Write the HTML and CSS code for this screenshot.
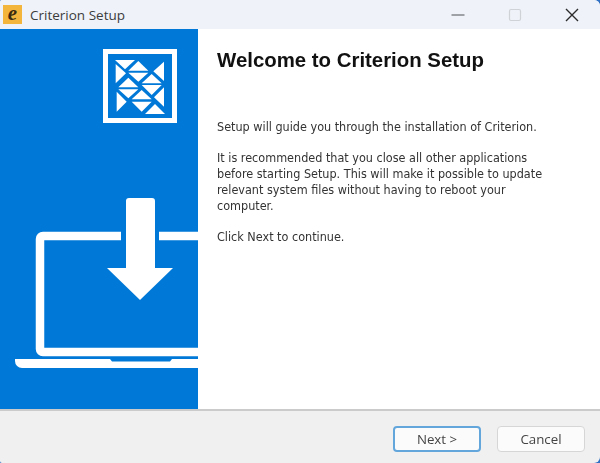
FILE: index.html
```html
<!DOCTYPE html>
<html lang="en">
<head>
  <meta charset="UTF-8" />
  <title>Criterion Setup</title>
  <link rel="stylesheet" href="styles.css">
</head>
<body>
  <div class="window">
    <div class="titlebar">
      <span class="app-icon">e</span>
      <span class="title">Criterion Setup</span>
      <div class="controls">
        <svg class="ctl" width="14" height="14" viewBox="0 0 14 14"><path d="M0.5 7h13" stroke="#8a8d91" stroke-width="1.6"/></svg>
        <svg class="ctl" width="14" height="14" viewBox="0 0 14 14"><rect x="1.5" y="1.5" width="11" height="11" rx="1.5" fill="none" stroke="#cfd2d6" stroke-width="1.2"/></svg>
        <svg class="ctl" width="14" height="14" viewBox="0 0 14 14"><path d="M1 1l12 12M13 1L1 13" stroke="#2b2b2b" stroke-width="1.4"/></svg>
      </div>
    </div>

    <div class="content">
      <div class="sidebar">
        <svg class="art" width="198" height="380" viewBox="0 29 198 380">
          <!-- logo -->
          <rect x="105.500" y="51.500" width="69" height="69" fill="none" stroke="#fff" stroke-width="5"/>
          <g fill="#fff" transform="scale(0.33333)">
            <polygon points="345,180 405,180 375,208"/>
            <polygon points="385,212 445,212 415,183"/>
            <polygon points="385,218 445,218 415,245"/>
            <polygon points="492,185 492,243 460,214"/>
            <polygon points="347,192 347,250 378,220"/>
            <polygon points="355,262 415,262 385,233"/>
            <polygon points="425,250 485,250 455,222"/>
            <polygon points="355,268 415,268 385,295"/>
            <polygon points="425,255 485,255 455,285"/>
            <polygon points="492,262 492,320 462,292"/>
            <polygon points="395,298 455,298 425,270"/>
            <polygon points="395,305 455,305 425,335"/>
            <polygon points="350,275 350,335 380,305"/>
            <polygon points="435,342 495,342 465,312"/>
          </g>
          <!-- laptop -->
          <path d="M121 236H43a3 3 0 0 0-3 3v110a3 3 0 0 0 3 3h155M159 236h39" fill="none" stroke="#fff" stroke-width="8.500"/>
          <path d="M15 359h95l2 2.500h58l2-2.500h26v9H22a7 7 0 0 1-7-7z" fill="#fff"/>
          <!-- arrow -->
          <path d="M126 201a3 3 0 0 1 3-3h23a3 3 0 0 1 3 3v67h18l-33 32-33-32h19z" fill="#fff"/>
        </svg>
      </div>
      <div class="main">
        <h1>Welcome to Criterion Setup</h1>
        <p>Setup will guide you through the installation of Criterion.</p>
        <p>It is recommended that you close all other applications<br>before starting Setup. This will make it possible to update<br>relevant system files without having to reboot your<br>computer.</p>
        <p>Click Next to continue.</p>
      </div>
    </div>

    <div class="footer">
      <button class="btn btn-default">Next &gt;</button>
      <button class="btn">Cancel</button>
    </div>
  </div>
</body>
</html>
```

FILE: styles.css
```css
html, body {
  margin: 0;
  height: 100%;
  background-color: #2f6fc4;
}
.window {
  width: 600px;
  height: 463px;
  display: flex;
  flex-direction: column;
  overflow: hidden;
  background-color: #f0f0f0;
  border-radius: 2px 6px 6px 2px;
  font-family: "Liberation Sans", Arial, sans-serif;
  filter: blur(0.4px);
}
.titlebar {
  height: 29px;
  flex: none;
  display: flex;
  align-items: center;
  background-color: #eff3f9;
}
.app-icon {
  width: 19px;
  height: 19px;
  margin: 0 8px 0 3px;
  background-color: #f3b53c;
  color: #3a2a10;
  font-family: "Liberation Serif", serif;
  font-style: italic;
  font-weight: bold;
  font-size: 21px;
  line-height: 16px;
  text-align: center;
}
.title {
  font-family: "Open Sans", sans-serif;
  font-size: 13.500px;
  color: #3c3c3c;
}
.controls {
  margin-left: auto;
  margin-right: 21px;
  display: flex;
  gap: 43px;
}
.ctl {
  display: block;
}
.content {
  flex: 1;
  display: flex;
  min-height: 0;
}
.sidebar {
  width: 198px;
  flex: none;
  background-color: #0078d7;
}
.art {
  display: block;
}
.main {
  flex: 1;
  background-color: #fff;
  padding: 18px 0 0 19px;
  color: #333;
  font-family: "DejaVu Sans", sans-serif;
  font-stretch: condensed;
  font-size: 12.500px;
  line-height: 15.800px;
}
h1 {
  margin: 0 0 45px;
  font-family: "Liberation Sans", Arial, sans-serif;
  font-size: 20.400px;
  line-height: 27px;
  font-weight: bold;
  color: #111;
}
p {
  margin: 0 0 15.500px;
}
.footer {
  height: 54px;
  flex: none;
  box-sizing: border-box;
  border-top: 2px solid #cbcbcb;
  padding: 15px 15px 0 0;
  display: flex;
  justify-content: flex-end;
  align-items: flex-start;
  gap: 16px;
}
.btn {
  width: 88px;
  height: 26px;
  padding: 0;
  border: 1px solid #d6d6d6;
  border-radius: 4px;
  background-color: #fbfbfb;
  color: #444;
  font-family: "Open Sans", sans-serif;
  font-size: 13.300px;
}
.btn-default {
  border: 2px solid #62a6dc;
}
```
